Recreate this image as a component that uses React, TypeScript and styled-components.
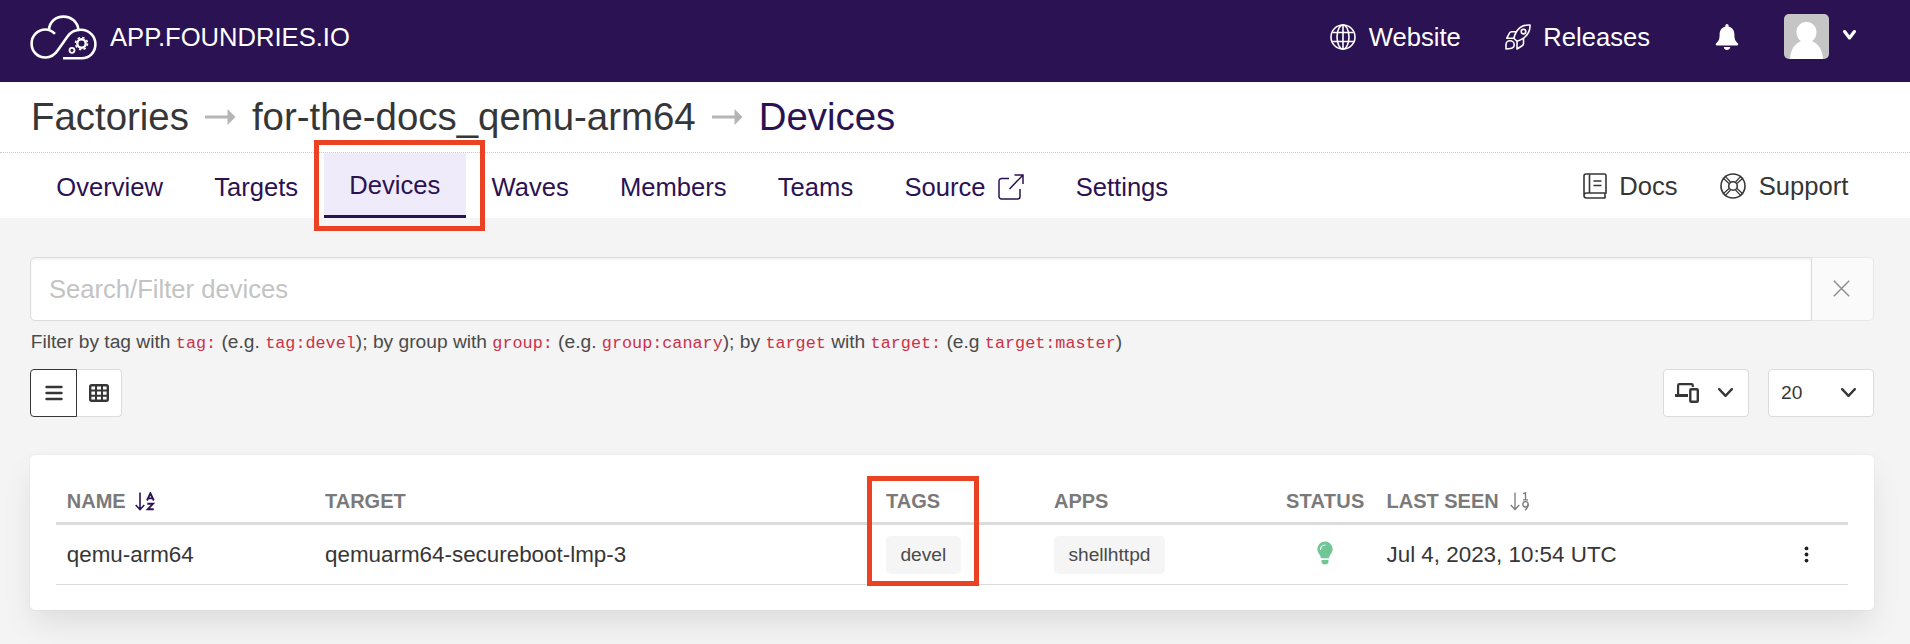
import React from "react";
import styled, { createGlobalStyle, css } from "styled-components";

const Global = createGlobalStyle`
  *, *::before, *::after { box-sizing: border-box; }
  html, body { margin: 0; padding: 0; background: #f4f4f4; }
  body {
    font-family: "Liberation Sans", Helvetica, Arial, sans-serif;
    font-size: 25.6px;
    color: #363636;
    min-height: 644px;
    overflow: hidden;
  }
  svg { display: block; flex: none; }
`;

const TopBar = styled.header`
  display: flex;
  align-items: center;
  height: 82px;
  padding: 0 54px 8px 30px;
  background: #2b1252;
  color: #fff;
`;
const Brand = styled.a`
  display: flex;
  align-items: center;
  gap: 13px;
  margin-right: auto;
  line-height: 30px;
`;
const TopLink = styled.a<{ $after: number }>`
  display: flex;
  align-items: center;
  gap: 12.5px;
  line-height: 30px;
  margin-right: ${(p) => p.$after}px;
`;
const BellButton = styled.span`
  margin-right: 45px;
`;
const AvatarMenu = styled.span`
  display: flex;
  align-items: center;
  gap: 14px;
  margin-bottom: 1px;
`;
const CaretSlot = styled.span<{ $lift: number }>`
  padding-bottom: ${(p) => p.$lift}px;
`;

const Crumbs = styled.nav`
  display: flex;
  align-items: center;
  height: 71px;
  padding: 0 31px;
  background: #fff;
  border-bottom: 1px dotted #c9c9c9;
  font-size: 38.4px;
  line-height: 44px;
`;
const Crumb = styled.a<{ $current?: boolean }>`
  color: ${(p) => (p.$current ? "#2b1252" : "#363636")};
`;
const CrumbArrow = styled.svg`
  margin: 0 16px;
`;

const NavBar = styled.nav`
  display: flex;
  height: 65px;
  padding: 0 36px 0 30.7px;
  background: #fff;
`;
const Tab = styled.a<{ $active?: boolean }>`
  position: relative;
  display: flex;
  align-items: center;
  gap: 13px;
  padding: 2px 25.6px 0;
  color: #2b1252;
  line-height: 30px;
  ${(p) =>
    p.$active &&
    css`
      padding-top: 1px;
      background: #f0ebfa;
      border-bottom: 3px solid #2b1252;
    `}
`;
const HelpLinks = styled.div`
  display: flex;
  margin-left: auto;
  gap: 42.5px;
  padding-right: 25.6px;
`;
const HelpLink = styled.a`
  display: flex;
  align-items: center;
  gap: 12.7px;
  line-height: 30px;
`;
const Highlight = styled.span<{ $top: number; $left: number; $w: number; $h: number }>`
  position: absolute;
  z-index: 2;
  top: ${(p) => p.$top}px;
  left: ${(p) => p.$left}px;
  width: ${(p) => p.$w}px;
  height: ${(p) => p.$h}px;
  border: 5px solid #ec4224;
  pointer-events: none;
`;

const Main = styled.main`
  padding: 39px 36px 34px 30px;
`;
const SearchGroup = styled.div`
  display: flex;
  height: 64px;
`;
const SearchInput = styled.input`
  flex: 1;
  min-width: 0;
  padding: 0 18px;
  border: 1px solid #dbdbdb;
  border-radius: 5px 0 0 5px;
  background: #fff;
  box-shadow: inset 0 2px 3px rgba(10, 10, 10, 0.05);
  font: inherit;
  outline: none;
  &::placeholder { color: #c3c3c3; opacity: 1; }
`;
const ClearButton = styled.button`
  display: flex;
  align-items: center;
  justify-content: center;
  width: 62px;
  padding: 0 2px 1px 0;
  border: 1px solid #e8e8e8;
  border-left: 0;
  border-radius: 0 5px 5px 0;
  background: #fafafa;
`;
const Hint = styled.p`
  margin: 9px 0 15px 0.8px;
  font-size: 19.2px;
  line-height: 24px;
  color: #4a4a4a;
  white-space: nowrap;
`;
const Code = styled.code`
  font: 16.8px/20px "Liberation Mono", "Courier New", monospace;
  color: #cc3048;
`;
const Toolbar = styled.div`
  display: flex;
  height: 48px;
`;
const ToolButton = styled.button<{ $w: number; $side: "left" | "right"; $active?: boolean }>`
  display: flex;
  align-items: center;
  justify-content: center;
  width: ${(p) => p.$w}px;
  padding: 0;
  background: #fff;
  border: 1px solid ${(p) => (p.$active ? "#363636" : "#dbdbdb")};
  ${(p) => p.$side === "right" && "border-left: 0;"}
  border-radius: ${(p) => (p.$side === "left" ? "4px 0 0 4px" : "0 4px 4px 0")};
`;
const Dropdown = styled.button<{ $w: number }>`
  display: flex;
  align-items: center;
  justify-content: space-between;
  width: ${(p) => p.$w}px;
  margin-left: 19px;
  padding: 0 15px 0 11px;
  background: #fff;
  border: 1px solid #dbdbdb;
  border-radius: 4px;
  font: inherit;
  font-size: 19.2px;
  color: #363636;
`;
const Push = styled.div`
  display: flex;
  margin-left: auto;
`;
const PageSize = styled(Dropdown)`
  padding: 0 17px 0 12px;
`;

const Card = styled.section`
  height: 155px;
  margin-top: 38px;
  padding: 26px 26px 0;
  background: #fff;
  border-radius: 5px;
  box-shadow: 0 16px 32px -4px rgba(10, 10, 10, 0.1), 0 0 0 1px rgba(10, 10, 10, 0.02);
`;
const columns = css`
  display: grid;
  grid-template-columns: 259px 561px 168px 230px 102.5px 1fr 83px;
  align-items: center;
`;
const HeadRow = styled.div`
  ${columns}
  height: 44px;
  padding-bottom: 1px;
  border-bottom: 3px solid #dbdbdb;
  font-size: 20px;
  font-weight: 700;
  line-height: 24px;
  color: #7a7a7a;
`;
const BodyRow = styled.div`
  ${columns}
  height: 60px;
  border-bottom: 1px solid #dbdbdb;
  font-size: 22.4px;
  line-height: 26px;
`;
const Cell = styled.div<{ $center?: boolean; $gap?: number }>`
  position: relative;
  display: flex;
  align-items: center;
  gap: ${(p) => p.$gap ?? 9}px;
  padding: 0 10px;
  white-space: nowrap;
  ${(p) => p.$center && "justify-content: center; padding: 0;"}
  &:first-child { padding-left: 10.8px; }
`;
const StatusHead = styled.span`
  letter-spacing: 0.25px;
`;
const StatusIcon = styled.span`
  padding-bottom: 3px;
`;
const Tag = styled.span`
  display: flex;
  align-items: center;
  height: 38px;
  padding: 0 14.4px;
  background: #f5f5f5;
  border-radius: 5px;
  font-size: 19.2px;
  color: #4a4a4a;
`;

const Logo = () => (
  <svg width="67" height="45" viewBox="0 0 67 45" fill="none" stroke="#fff" strokeWidth="2.6">
    <path d="M25 18.800C22 15.800 19 14.500 15.500 14.500C7.500 14.500 1.600 21 1.600 28.500C1.600 36.500 7.500 42.500 15.500 42.500C21 42.500 25 39.500 28 35L37.500 21.500C40.500 17 45 14.700 51 14.700C59.500 14.700 65.400 21.500 65.400 29C65.400 37 60 43.300 51.500 43.300H33M19 14.700C19.500 7 25.500 1.600 33.500 1.600C41.500 1.600 47.500 7 48.500 14.700" />
    <circle cx="51.500" cy="28.500" r="4.200" strokeWidth="2.400" />
    <circle cx="51.500" cy="28.500" r="6" strokeWidth="1.600" strokeDasharray="2.400 2.312" />
    <circle cx="42" cy="35.300" r="2.500" strokeWidth="1.800" />
  </svg>
);
const Globe = () => (
  <svg width="26" height="26" viewBox="0 0 26 26" fill="none" stroke="currentColor" strokeWidth="1.600">
    <circle cx="13" cy="13" r="12" />
    <ellipse cx="13" cy="13" rx="6" ry="12" />
    <path d="M13 1v24M2.500 8.500h21M2.500 17.500h21" />
  </svg>
);
const Rocket = () => (
  <svg width="26" height="26" viewBox="0 0 26 26" fill="none" stroke="currentColor" strokeWidth="1.600" strokeLinejoin="round">
    <path d="M25 1C18.500.500 14 3.500 11.500 7.500C10.300 9.500 9.500 11.500 8.800 14.200L12 17.300C14.500 16.600 16.500 15.700 18.500 14.200C22.500 11.200 25.300 7 25 1Z" />
    <circle cx="18.500" cy="7.600" r="2.300" />
    <path d="M11.500 7.700H6.800C5.500 7.700 5 8 4.500 9L1.800 14.200H8.800M18.500 14.200V19.500C18.500 20.500 18 21.200 17.200 21.700L12 25V17.300M1 25V20.500C1 18.300 2.800 16.800 4.800 16.800C7.200 16.800 9.200 18.500 9.200 20.800C9.200 23.200 7.800 24.200 5.500 24.500Z" />
  </svg>
);
const Bell = () => (
  <svg width="24" height="26" viewBox="0 0 24 26" fill="#fff">
    <path d="M12 0c1 0 1.600.700 1.600 1.800v.700c4 1 5.800 4.200 5.800 8 0 5 1 6.500 3.400 8.700.900.800.500 2.300-.800 2.300H2c-1.300 0-1.700-1.500-.800-2.300 2.400-2.200 3.400-3.700 3.400-8.700 0-3.800 1.800-7 5.800-8v-.700C10.400.700 11 0 12 0ZM8.800 23h6.400c0 1.600-1.300 3-3.200 3s-3.200-1.400-3.200-3Z" />
  </svg>
);
const Avatar = () => (
  <svg width="45" height="45" viewBox="0 0 45 45">
    <rect width="45" height="45" rx="5" fill="#c5c5c5" />
    <path d="M22.500 8c6 0 10 4.500 10 10 0 4-1.500 7-4.500 9.300C34.500 29.500 38.500 36 39 45H6c.500-9 4.500-15.500 11-17.700C14 25 12.500 22 12.500 18c0-5.500 4-10 10-10Z" fill="#fff" />
  </svg>
);
const Chevron = ({ w, h, sw }: { w: number; h: number; sw: number }) => (
  <svg width={w} height={h} viewBox={`0 0 ${w} ${h}`} fill="none" stroke="currentColor" strokeWidth={sw} strokeLinecap="round" strokeLinejoin="round">
    <path d={`M${sw / 2} ${sw / 2}L${w / 2} ${h - sw / 2 - 0.5}L${w - sw / 2} ${sw / 2}`} />
  </svg>
);
const Arrow = () => (
  <CrumbArrow width="31" height="18" viewBox="0 0 31 18" fill="#b5b5b5">
    <path d="M0 7.500h22.500V1l8 8-8 8v-6.500H0z" />
  </CrumbArrow>
);
const External = () => (
  <svg width="26" height="26" viewBox="0 0 26 26" fill="none" stroke="currentColor" strokeWidth="1.500">
    <path d="M11 4.500H3.500a2.500 2.500 0 0 0-2.500 2.500V22.500A2.500 2.500 0 0 0 3.500 25H19.500A2.500 2.500 0 0 0 22 22.500V15M16.500 1H25V10M25 1L11.500 15" />
  </svg>
);
const Book = () => (
  <svg width="24" height="26" viewBox="0 0 24 26" fill="none" stroke="currentColor" strokeWidth="1.600">
    <path d="M22.500 25H3.500A2.500 2.500 0 0 1 1 22.500V3A2 2 0 0 1 3 1H21.500A1.500 1.500 0 0 1 23 2.500V20H3.500A2.500 2.500 0 0 0 1 22.500M22 20V25M6.500 1v19M10.500 8h8M10.500 12.500h8" />
  </svg>
);
const Lifebuoy = () => (
  <svg width="26" height="26" viewBox="0 0 26 26" fill="none" stroke="currentColor" strokeWidth="1.600">
    <circle cx="13" cy="13" r="12" />
    <circle cx="13" cy="13" r="4.300" />
    <path d="M2.800 4.800L9 10.500M4.800 2.800L10.500 9M23.200 4.800L17 10.500M21.200 2.800L15.500 9M2.800 21.200L9 15.500M4.800 23.200L10.500 17M23.200 21.200L17 15.500M21.200 23.200L15.500 17" strokeWidth="1.200" />
  </svg>
);
const Cross = () => (
  <svg width="17" height="17" viewBox="0 0 17 17" stroke="#8f8f8f" strokeWidth="1.500">
    <path d="M.800.800L16.200 16.200M16.200.800L.800 16.200" />
  </svg>
);
const ListIcon = () => (
  <svg width="18" height="16" viewBox="0 0 18 16" stroke="#363636" strokeWidth="2.400" strokeLinecap="round">
    <path d="M1.500 2H16.500M1.500 8H16.500M1.500 14H16.500" />
  </svg>
);
const GridIcon = () => (
  <svg width="20" height="18" viewBox="0 0 20 18" fill="none" stroke="#363636" strokeWidth="2">
    <rect x="1.200" y="1.200" width="17.600" height="15.600" rx="1.500" strokeWidth="2.400" />
    <path d="M1 6.500H19M1 11.800H19M7 1V17M13 1V17" />
  </svg>
);
const DevicesIcon = () => (
  <svg width="24" height="20" viewBox="0 0 24 20" fill="none" stroke="#363636" strokeWidth="2.200">
    <path d="M3.100 11.500V2.500A1.300 1.300 0 0 1 4.400 1.200H16.500A1.300 1.300 0 0 1 17.800 2.500V4" />
    <path d="M0 12.500H13" strokeWidth="3" />
    <rect x="15.300" y="6.200" width="7.500" height="12.600" rx="1" strokeWidth="2.400" />
  </svg>
);
const SortAlpha = () => (
  <svg width="20" height="19" viewBox="0 0 20 19" fill="none" stroke="#2b1252" strokeWidth="1.900">
    <path d="M5 .500V17M.700 13L5 17.500L9.300 13" strokeWidth="1.600" />
    <path d="M12 8.500L15.400 1.300L18.800 8.500M13.200 6.400H17.600M12.300 11.800H18L12.800 17.200H18.700" />
  </svg>
);
const SortNumeric = () => (
  <svg width="20" height="19" viewBox="0 0 20 19" fill="none" stroke="#7a7a7a" strokeWidth="1.300">
    <path d="M5 .500V17M.700 13L5 17.500L9.300 13M13 1.700L15.500 .900V7.800M13 7.800H18" />
    <circle cx="15.500" cy="12.300" r="2.700" />
    <path d="M18.200 12.300C18.200 15 17 17 15 18.300" />
  </svg>
);
const Bulb = () => (
  <svg width="16" height="24" viewBox="0 0 16 24" fill="#71c695">
    <path d="M8 .500a7.600 7.600 0 0 1 7.700 7.600c0 3.800-3 5.300-3.700 9.200H4C3.300 13.400.300 11.900.300 8.100A7.600 7.600 0 0 1 8 .500ZM4.500 19h7v1.500c0 1.800-1.300 3-3.500 3s-3.500-1.200-3.500-3Z" />
    <path d="M3.500 8.500A4.700 4.700 0 0 1 8 4" fill="none" stroke="#fff" strokeWidth="1.200" strokeLinecap="round" />
  </svg>
);
const Dots = () => (
  <svg width="5" height="17" viewBox="0 0 5 17" fill="#222">
    <circle cx="2.500" cy="2.400" r="1.900" />
    <circle cx="2.500" cy="8.500" r="1.900" />
    <circle cx="2.500" cy="14.600" r="1.900" />
  </svg>
);

export default function App() {
  return (
    <>
      <Global />
      <TopBar>
        <Brand><Logo />APP.FOUNDRIES.IO</Brand>
        <TopLink $after={44}><Globe />Website</TopLink>
        <TopLink $after={65}><Rocket />Releases</TopLink>
        <BellButton><Bell /></BellButton>
        <AvatarMenu>
          <Avatar />
          <CaretSlot $lift={4}><Chevron w={13} h={10} sw={3.2} /></CaretSlot>
        </AvatarMenu>
      </TopBar>
      <Crumbs>
        <Crumb>Factories</Crumb>
        <Arrow />
        <Crumb>for-the-docs_qemu-arm64</Crumb>
        <Arrow />
        <Crumb $current>Devices</Crumb>
      </Crumbs>
      <NavBar>
        <Tab>Overview</Tab>
        <Tab>Targets</Tab>
        <Tab $active>
          Devices
          <Highlight $top={-13} $left={-10} $w={171} $h={91} />
        </Tab>
        <Tab>Waves</Tab>
        <Tab>Members</Tab>
        <Tab>Teams</Tab>
        <Tab>Source<External /></Tab>
        <Tab>Settings</Tab>
        <HelpLinks>
          <HelpLink><Book />Docs</HelpLink>
          <HelpLink><Lifebuoy />Support</HelpLink>
        </HelpLinks>
      </NavBar>
      <Main>
        <SearchGroup>
          <SearchInput placeholder="Search/Filter devices" />
          <ClearButton><Cross /></ClearButton>
        </SearchGroup>
        <Hint>
          Filter by tag with <Code>tag:</Code> (e.g. <Code>tag:devel</Code>); by group with <Code>group:</Code> (e.g.{" "}
          <Code>group:canary</Code>); by <Code>target</Code> with <Code>target:</Code> (e.g <Code>target:master</Code>)
        </Hint>
        <Toolbar>
          <ToolButton $w={47} $side="left" $active><ListIcon /></ToolButton>
          <ToolButton $w={45} $side="right"><GridIcon /></ToolButton>
          <Push>
            <Dropdown $w={86}>
              <DevicesIcon />
              <CaretSlot $lift={1}><Chevron w={15} h={9.5} sw={2.3} /></CaretSlot>
            </Dropdown>
            <PageSize $w={106}>
              20
              <CaretSlot $lift={1}><Chevron w={15} h={9.5} sw={2.3} /></CaretSlot>
            </PageSize>
          </Push>
        </Toolbar>
        <Card>
          <HeadRow>
            <Cell>NAME<SortAlpha /></Cell>
            <Cell>TARGET</Cell>
            <Cell>
              TAGS
              <Highlight $top={-13} $left={-9} $w={112} $h={110} />
            </Cell>
            <Cell>APPS</Cell>
            <Cell $center><StatusHead>STATUS</StatusHead></Cell>
            <Cell $gap={11}>LAST SEEN<SortNumeric /></Cell>
            <Cell />
          </HeadRow>
          <BodyRow>
            <Cell>qemu-arm64</Cell>
            <Cell>qemuarm64-secureboot-lmp-3</Cell>
            <Cell><Tag>devel</Tag></Cell>
            <Cell><Tag>shellhttpd</Tag></Cell>
            <Cell $center><StatusIcon><Bulb /></StatusIcon></Cell>
            <Cell>Jul 4, 2023, 10:54 UTC</Cell>
            <Cell $center><Dots /></Cell>
          </BodyRow>
        </Card>
      </Main>
    </>
  );
}
